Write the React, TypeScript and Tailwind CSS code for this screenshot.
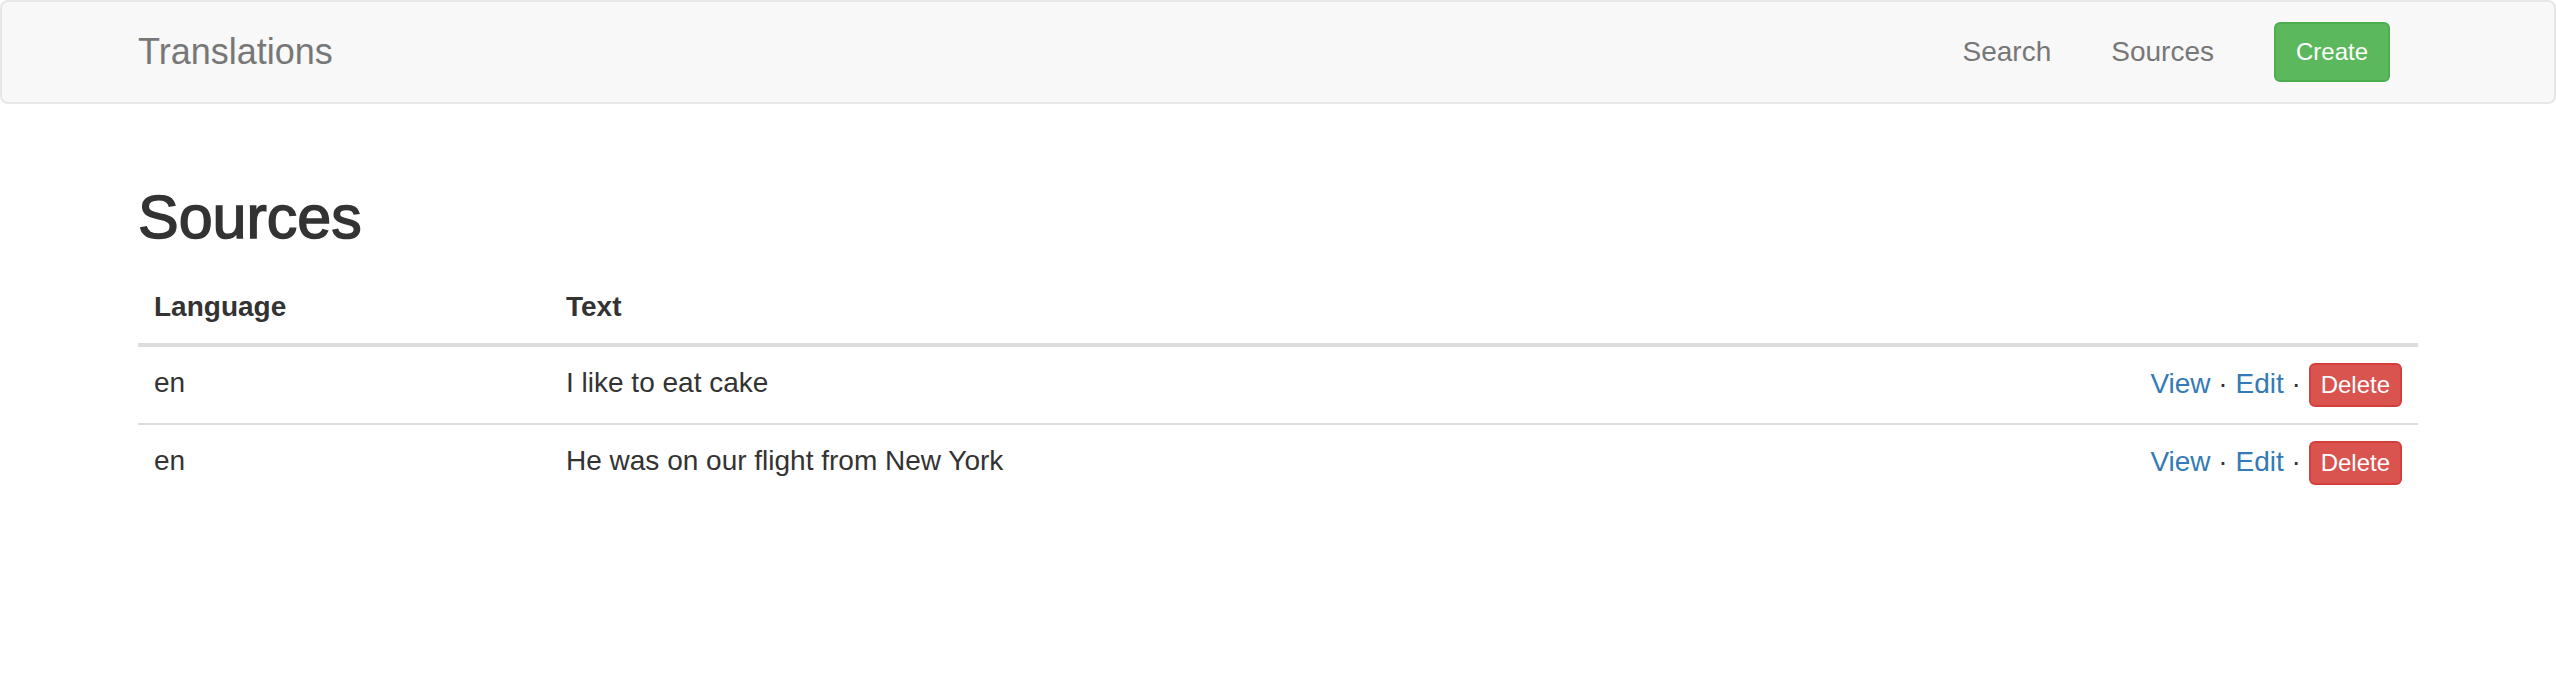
import React from "react";

const rows = [
  { lang: "en", text: "I like to eat cake" },
  { lang: "en", text: "He was on our flight from New York" },
];

export default function App() {
  return (
    <div className="min-h-[676px] bg-white font-['Liberation_Sans',Arial,sans-serif] text-[28px] leading-[40px] text-[#333]">
      <nav className="h-[104px] rounded-[8px] border-2 border-[#e7e7e7] bg-[#f8f8f8]">
        <div className="mx-auto flex h-[100px] w-[2340px] items-center justify-between px-[30px]">
          <a className="text-[36px] leading-[40px] text-[#777]">Translations</a>
          <div className="flex items-center">
            <a className="px-[30px] py-[30px] text-[#777]">Search</a>
            <a className="px-[30px] py-[30px] text-[#777]">Sources</a>
            <button className="ml-[30px] mr-[28px] rounded-[6px] border-2 border-[#4cae4c] bg-[#5cb85c] px-[20px] py-[10px] text-[24px] leading-[36px] text-white">
              Create
            </button>
          </div>
        </div>
      </nav>
      <div className="mx-auto w-[2340px] px-[30px]">
        <h1 className="mb-[14px] mt-[73px] text-[61px] font-medium leading-[80px] text-[#333] [-webkit-text-stroke:1.5px_#333]">
          Sources
        </h1>
        <table className="w-full table-fixed border-collapse">
          <thead>
            <tr>
              <th className="w-[412px] border-b-4 border-[#ddd] p-[16px] text-left align-bottom font-bold">
                Language
              </th>
              <th className="border-b-4 border-[#ddd] p-[16px] text-left align-bottom font-bold">
                Text
              </th>
              <th className="w-[600px] border-b-4 border-[#ddd] p-[16px] align-bottom"></th>
            </tr>
          </thead>
          <tbody>
            {rows.map((r, i) => (
              <tr key={i}>
                <td className={`${i > 0 ? "border-t-2" : ""} border-[#ddd] p-[16px] align-top`}>{r.lang}</td>
                <td className={`${i > 0 ? "border-t-2" : ""} border-[#ddd] p-[16px] align-top`}>{r.text}</td>
                <td className={`${i > 0 ? "border-t-2" : ""} border-[#ddd] p-[16px] text-right align-top`}>
                  <a className="text-[#337ab7]">View</a> · <a className="text-[#337ab7]">Edit</a> ·{" "}
                  <button className="inline-block rounded-[6px] border-2 border-[#d43f3a] bg-[#d9534f] px-[10px] py-[2px] text-[24px] leading-[36px] text-white">
                    Delete
                  </button>
                </td>
              </tr>
            ))}
          </tbody>
        </table>
      </div>
    </div>
  );
}
